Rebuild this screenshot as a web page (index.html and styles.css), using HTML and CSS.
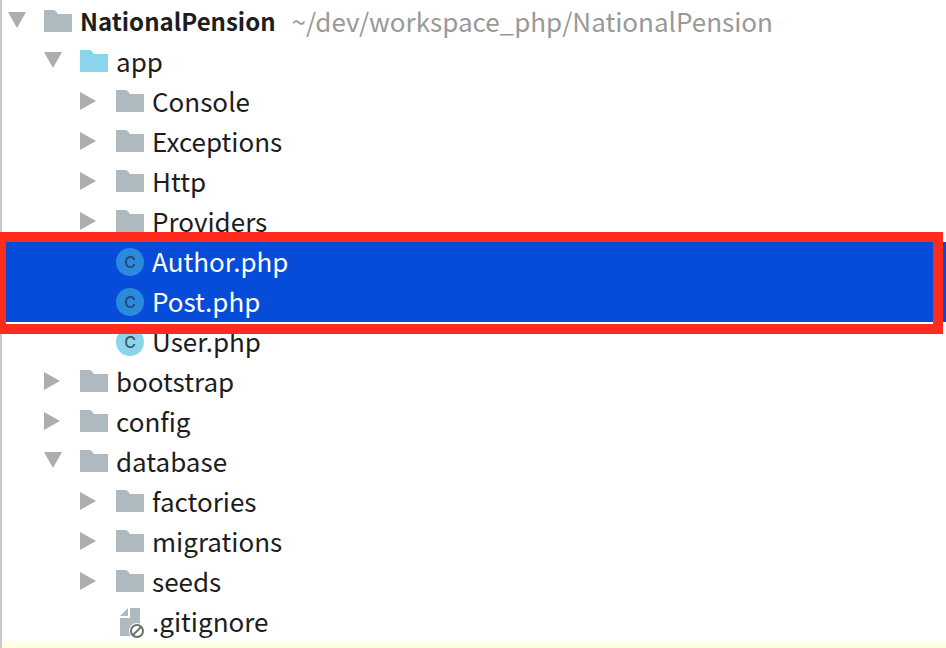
FILE: index.html
```
<!DOCTYPE html>
<html lang="en">
<head>
    <meta charset="UTF-8">
    <meta name="viewport" content="width=device-width, initial-scale=1.0">
    <title>NationalPension</title>
    <link rel="stylesheet" href="styles.css">
</head>
<body>

    <svg class="symbols" aria-hidden="true">
        <symbol id="arrow-down" viewBox="0 0 18 20"><path d="M0 0H18L9 16z"/></symbol>
        <symbol id="arrow-right" viewBox="0 0 18 20"><path d="M0 0L16 9L0 18z"/></symbol>
        <symbol id="folder" viewBox="0 0 28 28"><path d="M0 2H9C11 2 12 3 14 6H28V24H0z"/></symbol>
        <symbol id="ignored" viewBox="0 0 28 32">
            <path d="M14 0H24V28H4V10H14z"/>
            <path d="M4 8L12 0V8z"/>
            <circle class="ban-back" cx="21" cy="23" r="8"/>
            <circle class="ban" cx="21" cy="23" r="6"/>
            <path class="ban" d="M17 27L25 19"/>
        </symbol>
    </svg>

    <div class="panel">
        <ul class="tree">
            <li>
                <button class="row"><svg class="arrow"><use href="#arrow-down"/></svg><svg class="icon"><use href="#folder"/></svg><b>NationalPension</b><span class="path">~/dev/workspace_php/NationalPension</span></button>
                <ul>
                    <li>
                        <button class="row"><svg class="arrow"><use href="#arrow-down"/></svg><svg class="icon source"><use href="#folder"/></svg><span>app</span></button>
                        <ul>
                            <li><button class="row"><svg class="arrow"><use href="#arrow-right"/></svg><svg class="icon"><use href="#folder"/></svg><span>Console</span></button></li>
                            <li><button class="row"><svg class="arrow"><use href="#arrow-right"/></svg><svg class="icon"><use href="#folder"/></svg><span>Exceptions</span></button></li>
                            <li><button class="row"><svg class="arrow"><use href="#arrow-right"/></svg><svg class="icon"><use href="#folder"/></svg><span>Http</span></button></li>
                            <li><button class="row"><svg class="arrow"><use href="#arrow-right"/></svg><svg class="icon"><use href="#folder"/></svg><span>Providers</span></button></li>
                            <li class="marked">
                                <ul>
                                    <li><button class="row file selected"><i class="icon class">C</i><span>Author.php</span></button></li>
                                    <li><button class="row file selected"><i class="icon class">C</i><span>Post.php</span></button></li>
                                </ul>
                            </li>
                            <li><button class="row file"><i class="icon class">C</i><span>User.php</span></button></li>
                        </ul>
                    </li>
                    <li><button class="row"><svg class="arrow"><use href="#arrow-right"/></svg><svg class="icon"><use href="#folder"/></svg><span>bootstrap</span></button></li>
                    <li><button class="row"><svg class="arrow"><use href="#arrow-right"/></svg><svg class="icon"><use href="#folder"/></svg><span>config</span></button></li>
                    <li>
                        <button class="row"><svg class="arrow"><use href="#arrow-down"/></svg><svg class="icon"><use href="#folder"/></svg><span>database</span></button>
                        <ul>
                            <li><button class="row"><svg class="arrow"><use href="#arrow-right"/></svg><svg class="icon"><use href="#folder"/></svg><span>factories</span></button></li>
                            <li><button class="row"><svg class="arrow"><use href="#arrow-right"/></svg><svg class="icon"><use href="#folder"/></svg><span>migrations</span></button></li>
                            <li><button class="row"><svg class="arrow"><use href="#arrow-right"/></svg><svg class="icon"><use href="#folder"/></svg><span>seeds</span></button></li>
                            <li><button class="row file"><svg class="icon tall"><use href="#ignored"/></svg><span>.gitignore</span></button></li>
                        </ul>
                    </li>
                </ul>
            </li>
        </ul>
        <div class="excluded"></div>
    </div>

</body>
</html>
```
FILE: styles.css
```
body {
    margin: 0;
    background: #fff;
    color: #1d1d1d;
    font-family: "Noto Sans CJK KR", sans-serif;
    font-size: 26px;
    line-height: 38px;
    overflow-x: hidden;
}
.symbols {
    display: block;
    width: 0;
    height: 0;
}
.panel {
    display: flex;
    flex-direction: column;
    min-height: 100vh;
    box-sizing: border-box;
    padding-top: 2px;
    border-left: 2px solid #c9c9c9;
}
ul {
    margin: 0;
    padding: 0;
    list-style: none;
}

/* each level moves the row content 36px in, the row itself stays full width */
.tree { --indent: 6px; }
.tree > li > ul { --indent: 42px; }
.tree > li > ul > li > ul { --indent: 78px; }

.row {
    display: flex;
    align-items: center;
    width: 100%;
    height: 40px;
    padding: 0 0 0 var(--indent);
    border: none;
    background: none;
    color: inherit;
    font: inherit;
    text-align: left;
    white-space: nowrap;
    cursor: pointer;
}
.row b, .row span { padding-bottom: 2px; }
.row b { font-size: 24px; }
.file { padding-left: calc(var(--indent) + 36px); }
.selected {
    background: #074bd9;
    color: #fff;
}
.row .path {
    margin-left: 16px;
    color: #999;
}

.arrow {
    flex: none;
    width: 18px;
    height: 20px;
    margin-right: 18px;
    fill: #adadad;
}
.icon {
    flex: none;
    width: 28px;
    height: 28px;
    margin-right: 8px;
    fill: #aeb9c0;
}
.source { fill: #8cd3ec; }
.tall {
    height: 32px;
    margin-top: 4px;
}
.class {
    border-radius: 50%;
    background: #8cd3ec;
    color: #3b5763;
    font: 500 16px/28px Inter, sans-serif;
    text-align: center;
}
.selected .class {
    background: #2b8ade;
    color: #21486c;
}
.ban-back { fill: #fff; }
.ban {
    fill: none;
    stroke: #6e6e6e;
    stroke-width: 2;
}

/* red frame over the selected files */
.marked { position: relative; }
.marked::after {
    content: "";
    position: absolute;
    top: -10px;
    right: 3px;
    bottom: -12px;
    left: -6px;
    border: 10px solid #ff2b1d;
    pointer-events: none;
}
.excluded {
    flex: 1;
    min-height: 6px;
    background: #ffffe4;
}
```
